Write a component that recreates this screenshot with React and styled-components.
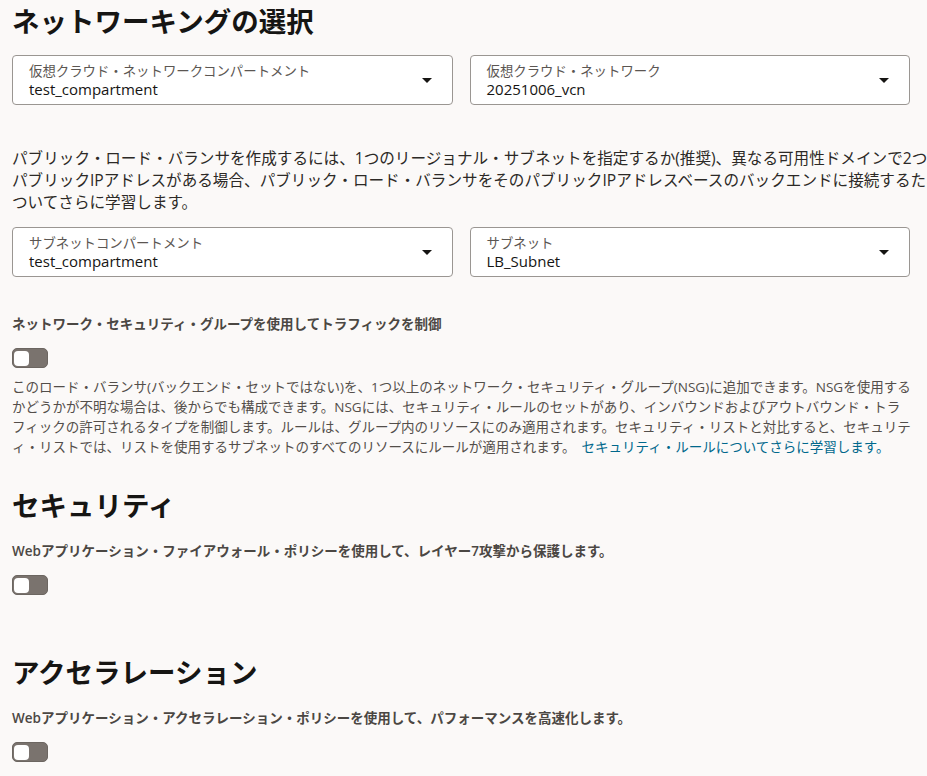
import React from "react";
import styled, { createGlobalStyle } from "styled-components";

const Global = createGlobalStyle`
  html, body {
    margin: 0;
    padding: 0;
    background: #fbf9f8;
    overflow: hidden;
  }
  body {
    font-family: "Open Sans", "Noto Sans CJK JP", sans-serif;
    color: #161513;
  }
`;

const Page = styled.div`
  width: 898px;
  padding: 4px 17px 0 12px;
  display: flex;
  flex-direction: column;
`;

const Heading = styled.h2`
  margin: 0;
  font-size: 27.5px;
  line-height: 35px;
  font-weight: 700;
  color: #161513;
  white-space: nowrap;
  margin-top: ${(p) => p.$top || 0}px;
`;

const SelectRow = styled.div`
  display: grid;
  grid-template-columns: 1fr 1fr;
  gap: 17px;
  margin-top: ${(p) => p.$top || 0}px;
`;

const SelectBox = styled.div`
  box-sizing: border-box;
  height: 50px;
  background: #ffffff;
  border: 1px solid #9a9692;
  border-radius: 4px;
  display: flex;
  align-items: center;
  padding: 0 20px 0 16px;
`;

const SelectText = styled.div`
  flex: 1;
  display: flex;
  flex-direction: column;
  padding-top: 1px;
`;

const SelectLabel = styled.span`
  font-size: 13.4px;
  line-height: 16px;
  color: #5b5652;
  white-space: nowrap;
`;

const SelectValue = styled.span`
  font-size: 15px;
  line-height: 20px;
  color: #161513;
`;

const Caret = styled.span`
  width: 0;
  height: 0;
  border-left: 5px solid transparent;
  border-right: 5px solid transparent;
  border-top: 5px solid #161513;
`;

const Intro = styled.p`
  margin: ${(p) => p.$top || 0}px 0 0;
  font-size: 15.6px;
  line-height: 22px;
  color: #2c2926;
  width: 1200px;
`;

const Line = styled.span`
  display: block;
  white-space: nowrap;
`;

const FieldLabel = styled.div`
  margin-top: ${(p) => p.$top || 0}px;
  font-size: 13.5px;
  line-height: 20px;
  font-weight: 600;
  color: #4b4743;
  white-space: nowrap;
`;

const Toggle = styled.div`
  box-sizing: border-box;
  width: 36px;
  height: 20px;
  margin-top: 14px;
  border-radius: 5px;
  background: #7a736e;
  border: 1.5px solid #6c6661;
  padding: 1px;
  display: flex;
  align-items: center;
`;

const Knob = styled.span`
  width: 15px;
  height: 15px;
  border-radius: 4px;
  background: #ffffff;
`;

const Help = styled.p`
  margin: 9px 0 0;
  font-size: 13.5px;
  line-height: 20px;
  color: #534e4a;
`;

const Link = styled.a`
  color: #00688c;
  text-decoration: none;
  margin-left: 6px;
`;

function Select({ label, value }) {
  return (
    <SelectBox>
      <SelectText>
        <SelectLabel>{label}</SelectLabel>
        <SelectValue>{value}</SelectValue>
      </SelectText>
      <Caret />
    </SelectBox>
  );
}

function Switch() {
  return (
    <Toggle>
      <Knob />
    </Toggle>
  );
}

export default function App() {
  return (
    <>
      <Global />
      <Page>
        <Heading>ネットワーキングの選択</Heading>
        <SelectRow $top={16}>
          <Select label="仮想クラウド・ネットワークコンパートメント" value="test_compartment" />
          <Select label="仮想クラウド・ネットワーク" value="20251006_vcn" />
        </SelectRow>
        <Intro $top={42}>
          <Line>
            パブリック・ロード・バランサを作成するには、1つのリージョナル・サブネットを指定するか(推奨)、異なる可用性ドメインで2つのアベイラビリティ・ドメイン固有のサブネットを指定する必要があります。
          </Line>
          <Line>
            パブリックIPアドレスがある場合、パブリック・ロード・バランサをそのパブリックIPアドレスベースのバックエンドに接続するために使用できます。ロード・バランサのネットワーキングに
          </Line>
          <Line>ついてさらに学習します。</Line>
        </Intro>
        <SelectRow $top={14}>
          <Select label="サブネットコンパートメント" value="test_compartment" />
          <Select label="サブネット" value="LB_Subnet" />
        </SelectRow>
        <FieldLabel $top={37}>ネットワーク・セキュリティ・グループを使用してトラフィックを制御</FieldLabel>
        <Switch />
        <Help>
          <Line>
            このロード・バランサ(バックエンド・セットではない)を、1つ以上のネットワーク・セキュリティ・グループ(NSG)に追加できます。NSGを使用する
          </Line>
          <Line>
            かどうかが不明な場合は、後からでも構成できます。NSGには、セキュリティ・ルールのセットがあり、インバウンドおよびアウトバウンド・トラ
          </Line>
          <Line>
            フィックの許可されるタイプを制御します。ルールは、グループ内のリソースにのみ適用されます。セキュリティ・リストと対比すると、セキュリテ
          </Line>
          <Line>
            ィ・リストでは、リストを使用するサブネットのすべてのリソースにルールが適用されます。
            <Link href="#">セキュリティ・ルールについてさらに学習します。</Link>
          </Line>
        </Help>
        <Heading $top={31}>セキュリティ</Heading>
        <FieldLabel $top={18}>Webアプリケーション・ファイアウォール・ポリシーを使用して、レイヤー7攻撃から保護します。</FieldLabel>
        <Switch />
        <Heading $top={60}>アクセラレーション</Heading>
        <FieldLabel $top={18}>Webアプリケーション・アクセラレーション・ポリシーを使用して、パフォーマンスを高速化します。</FieldLabel>
        <Switch />
      </Page>
    </>
  );
}
